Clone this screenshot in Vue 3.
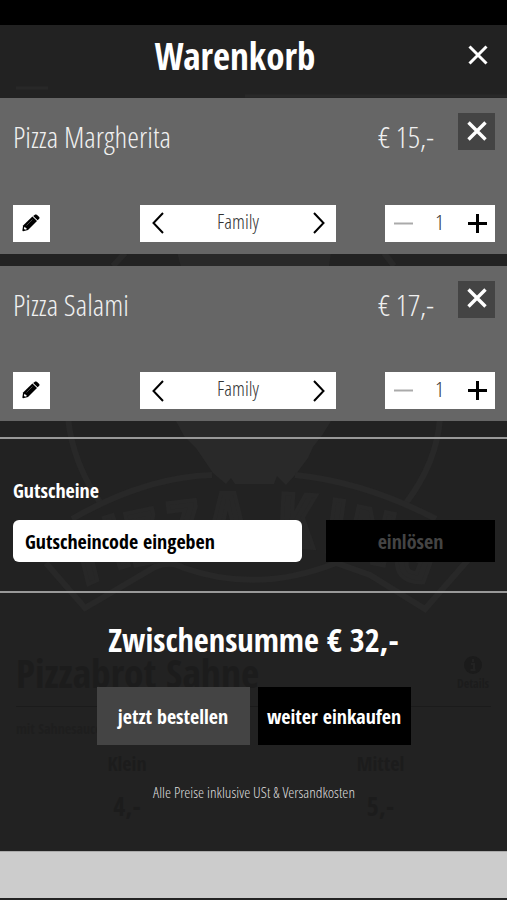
<script setup>
const items = [
  { name: 'Pizza Margherita', nameWidth: 158, price: '€ 15,-', size: 'Family', count: 1 },
  { name: 'Pizza Salami', nameWidth: 116, price: '€ 17,-', size: 'Family', count: 1 },
]
</script>

<template>
  <div class="screen">
    <div class="backdrop">
      <svg class="watermark" viewBox="0 0 507 625" fill="none" stroke="#282828" stroke-width="6">
        <path d="M16 88H48" stroke-width="3" />
        <path d="M245 96H507" stroke-width="3" />
        <path d="M125 253L113 266M384 253L394 266" />
        <path d="M177 252H331L329 267H181Z" fill="#292929" stroke="none" />
        <path d="M176 421H331L323 434L313 447L308 458L296 474L286 485L277 476L274 484H235L231 478L226 484L213 473L196 448L184 436Z" fill="#292929" stroke="none" />
        <path d="M68 418Q73 465 102 505M440 418Q437 462 406 503" />
        <path d="M72 519Q145 477 212 475M295 475Q365 482 436 519M46 563L85 608L155 567Q170 560 184 568Q258 594 336 563L370 575L425 609L468 560" />
        <g class="watermark-label">
          <text transform="translate(84 586) rotate(-24) skewX(-10)">P</text>
          <text transform="translate(114 570) rotate(-18)">I</text>
          <text transform="translate(134 566) rotate(-12)">Z</text>
          <text transform="translate(172 556) rotate(-7)">Z</text>
          <text transform="translate(208 546)">A</text>
          <text transform="translate(276 546) rotate(3)">K</text>
          <text transform="translate(321 551) rotate(8)">I</text>
          <text transform="translate(343 557) rotate(12)">N</text>
          <text transform="translate(388 572) rotate(20)">G</text>
        </g>
      </svg>
      <div class="dish">
        <div class="dish-head">
          <span class="dish-name">Pizzabrot Sahne</span>
          <span class="dish-info">
            <svg width="20" height="20" viewBox="0 0 20 20"><circle cx="10" cy="10" r="9" fill="#1b1b1b" /><path d="M8 9h3v5.500M7.500 15h5M10 4v3" stroke="#222" stroke-width="2" fill="none" /></svg>
            Details
          </span>
        </div>
        <div class="dish-note">mit Sahnesauce</div>
        <div class="dish-sizes"><span>Klein</span><span>Mittel</span></div>
        <div class="dish-prices"><span>4,-</span><span>5,-</span></div>
      </div>
    </div>

    <div class="status" />
    <header class="head">
      <h1>Warenkorb</h1>
      <svg class="close" width="20" height="20" viewBox="0 0 20 20"><path d="M1.500 1.500L18.500 18.500M18.500 1.500L1.500 18.500" stroke="#fff" stroke-width="3" /></svg>
    </header>

    <main>
      <section v-for="item in items" :key="item.name" class="item">
        <div class="row top">
          <svg class="light name" width="180" height="48"><text x="13" y="35" :textLength="item.nameWidth" lengthAdjust="spacingAndGlyphs">{{ item.name }}</text></svg>
          <svg class="light price" width="58" height="48"><text x="1" y="35" textLength="56" lengthAdjust="spacingAndGlyphs">{{ item.price }}</text></svg>
          <button class="remove">
            <svg width="20" height="20" viewBox="0 0 20 20"><path d="M1.500 1.500L18.500 18.500M18.500 1.500L1.500 18.500" stroke="#fff" stroke-width="3.400" /></svg>
          </button>
        </div>
        <div class="row">
          <button class="edit">
            <svg width="18" height="18" viewBox="0 0 18 18">
              <path d="M11.200 2L15.600 6.300L17.200 4.700Q17.900 3.900 17.200 3.100L14.900 .8Q14 .1 13.200 .6Z" />
              <path d="M10.400 2.600L15 7.100L6 16L1.200 17.200Q.3 17.200 .4 16.300L1.100 11.500Z" />
              <path d="M2.500 12.700L5.100 15L3 15.700L1.900 14.700Z" fill="#fff" />
              <path d="M4.500 11.500L10.500 5.500" stroke="#777" stroke-width=".6" />
            </svg>
          </button>
          <div class="size">
            <svg width="12" height="22" viewBox="0 0 12 22"><path d="M11 1L1.500 11L11 21" /></svg>
            <svg class="light small" width="44" height="37"><text x="0" y="24" textLength="42" lengthAdjust="spacingAndGlyphs">{{ item.size }}</text></svg>
            <svg width="12" height="22" viewBox="0 0 12 22"><path d="M1 1L10.500 11L1 21" /></svg>
          </div>
          <div class="qty">
            <svg width="19" height="19" viewBox="0 0 19 19"><path d="M0 9.500H19" stroke="#aaa" stroke-width="2" /></svg>
            <svg class="light small" width="10" height="37"><text x="-1" y="25" textLength="9" lengthAdjust="spacingAndGlyphs">{{ item.count }}</text></svg>
            <svg width="19" height="19" viewBox="0 0 19 19"><path d="M0 9.500H19M9.500 0V19" stroke="#000" stroke-width="3" /></svg>
          </div>
        </div>
      </section>
    </main>

    <section class="voucher">
      <h2>Gutscheine</h2>
      <div class="row">
        <div class="field"><span>Gutscheincode eingeben</span></div>
        <button class="redeem"><span>einlösen</span></button>
      </div>
    </section>

    <section class="summary">
      <div class="total"><span>Zwischensumme € 32,-</span></div>
      <div class="actions">
        <button class="order"><span>jetzt bestellen</span></button>
        <button class="more"><span>weiter einkaufen</span></button>
      </div>
      <svg class="light note" width="204" height="22"><text x="1" y="16" textLength="202" lengthAdjust="spacingAndGlyphs">Alle Preise inklusive USt &amp; Versandkosten</text></svg>
    </section>
    <footer class="foot" />
  </div>
</template>

<style>
body { margin: 0; background: #222; }
</style>

<style scoped>
* { box-sizing: border-box; }
.screen {
  position: relative;
  width: 507px;
  height: 900px;
  overflow: hidden;
  display: flex;
  flex-direction: column;
  background: #222;
  color: #fff;
  font-family: "Open Sans Condensed", "Open Sans", sans-serif;
  font-stretch: 75%;
  font-weight: 700;
}
.screen > * { position: relative; flex: none; }
h1, h2 { margin: 0; }
button { border: 0; padding: 0; font: inherit; color: inherit; display: flex; align-items: center; justify-content: center; }
.row { display: flex; align-items: center; justify-content: space-between; }
.light {
  display: block;
  flex: none;
  font-family: "Open Sans Condensed Light", "Open Sans", sans-serif;
  font-stretch: normal;
  font-weight: 300;
  font-variation-settings: "wdth" 75, "wght" 330;
  fill: #f0f0f0;
}
.screen > .backdrop { position: absolute; inset: 0; }
.watermark { display: block; width: 507px; height: 625px; }
.watermark-label { fill: #272727; stroke: #272727; stroke-width: 4px; font-size: 74px; font-weight: 800; }
.dish { padding: 20px 16px 0; color: #1c1c1c; }
.dish-head { display: flex; justify-content: space-between; height: 62px; border-bottom: 1px solid #1b1b1b; }
.dish-name { font-size: 39.500px; line-height: 56px; white-space: nowrap; }
.dish-info { width: 36px; padding-top: 10px; font-size: 12px; line-height: 17px; display: flex; flex-direction: column; align-items: center; }
.dish-note { font-size: 14px; line-height: 44px; height: 38px; font-weight: 400; color: #1e1e1e; }
.dish-sizes, .dish-prices { display: grid; grid-template-columns: 222px 1fr; text-align: center; font-size: 20px; line-height: 38px; margin-right: -32px; }
.dish-prices { font-size: 26px; line-height: 46px; }
.status { height: 25px; background: #000; }
.head { height: 73px; display: flex; justify-content: center; padding-right: 37px; }
h1 { font-size: 37px; line-height: 62px; font-weight: 700; }
.screen .close { position: absolute; right: 19px; top: 20px; }
main { display: flex; flex-direction: column; gap: 12px; }
.item { height: 155.500px; padding: 15px 12px 12px 13px; background: #666; display: flex; flex-direction: column; justify-content: space-between; }
.name, .price { font-size: 30px; height: 37px; overflow: visible; }
.name { margin-left: -13px; margin-right: auto; }
.price { margin-right: 23px; }
.top { height: 37px; }
.remove { width: 37px; height: 37px; background: #444; padding-bottom: 2px; }
.edit, .size, .qty { height: 37px; background: #fff; }
.edit { width: 37px; padding: 0 1px 1px 0; }
.edit svg { fill: #000; }
.size { width: 196px; margin-left: 41px; padding: 0 11px 0 12px; display: flex; align-items: center; justify-content: space-between; }
.size path { fill: none; stroke: #000; stroke-width: 2px; }
.small { font-size: 20px; fill: #333; }
.qty { width: 110px; padding: 0 8px 0 9px; display: flex; align-items: center; justify-content: space-between; }
.voucher { margin-top: 16px; height: 156px; border-top: 2px solid #999; border-bottom: 2px solid #999; padding: 38px 12px 0 13px; }
h2 { font-size: 20px; line-height: 28px; font-weight: 700; height: 43px; }
.field { width: 289px; height: 42px; border-radius: 6px; background: #fff; color: #000; padding-left: 12px; font-size: 20px; line-height: 43px; }
.redeem { width: 169px; height: 42px; background: #000; color: #444; font-size: 20px; }
.summary { height: 258px; display: flex; flex-direction: column; align-items: center; padding-top: 24px; }
.total { font-size: 32.400px; line-height: 44px; height: 70px; }
.actions { display: flex; gap: 8px; }
.actions button { width: 153px; height: 58px; font-size: 20px; }
.order { background: #444; }
.more { background: #000; }
.note { margin-top: 37px; font-size: 15px; fill: #ddd; }
.foot { height: 47px; background: #ccc; border-top: 1px solid #aaa; }
</style>
